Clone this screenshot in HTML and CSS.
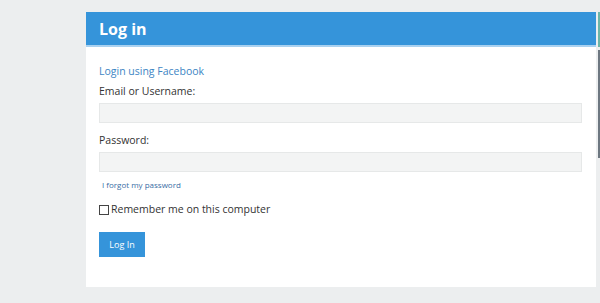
FILE: index.html
```html
<!DOCTYPE html>
<html>
<head>
<meta charset="utf-8">
<link rel="stylesheet" href="styles.css">
</head>
<body>
<div class="page">
  <div class="panel">
    <h1 class="head">Log in</h1>
    <form class="body">
      <a class="fb" href="#">Login using Facebook</a>
      <label class="lbl">Email or Username:</label>
      <div class="input"></div>
      <label class="lbl pw">Password:</label>
      <div class="input"></div>
      <a class="forgot" href="#">I forgot my password</a>
      <label class="remember"><span class="box"></span>Remember me on this computer</label>
      <button class="btn" type="button">Log In</button>
    </form>
  </div>
  <div class="edge"><div class="edge-top"></div><div class="edge-bar"></div></div>
</div>
</body>
</html>
```
FILE: styles.css
```css
html, body { margin: 0; padding: 0; }
body {
  background: #eceeef;
  font-family: "Open Sans", "DejaVu Sans", sans-serif;
  color: #333;
  width: 600px;
  height: 303px;
  overflow: hidden;
}
.page {
  position: relative;
  padding: 12px 4px 0 86px;
}
.panel {
  background: #fff;
  width: 510px;
  height: 275px;
}
.head {
  margin: 0;
  height: 33px;
  background: #3594da;
  border-bottom: 2px solid #a9d1f0;
  color: #fff;
  font-size: 16px;
  font-weight: 700;
  line-height: 35px;
  padding-left: 13px;
}
.body {
  display: flex;
  flex-direction: column;
  padding: 17px 14px 0 13px;
}
.fb {
  color: #3d85c4;
  text-decoration: none;
  font-size: 10.5px;
  line-height: 15px;
  height: 15px;
}
.lbl {
  font-size: 10.5px;
  line-height: 15px;
  margin-top: 5px;
  color: #333;
}
.lbl.pw { margin-top: 10px; }
.input {
  margin-top: 4px;
  height: 18px;
  background: #f3f4f4;
  border: 1px solid #e6e8e8;
}
.forgot {
  margin: 7px 0 0 3px;
  font-size: 8px;
  line-height: 12px;
  color: #3a6ea5;
  text-decoration: none;
}
.remember {
  display: flex;
  align-items: center;
  margin-top: 11px;
  font-size: 10.5px;
  line-height: 15px;
  color: #333;
}
.box {
  width: 8px;
  height: 8px;
  border: 1px solid #444;
  margin-right: 2px;
}
.btn {
  align-self: flex-start;
  margin-top: 15px;
  width: 46px;
  height: 25px;
  background: #3594da;
  border: 0;
  color: #fff;
  font-family: "Open Sans", "DejaVu Sans", sans-serif;
  font-size: 9px;
  padding: 0;
}
.edge {
  position: absolute;
  left: 598px;
  top: 12px;
  width: 2px;
}
.edge-top { height: 35px; background: #6cb6a8; }
.edge-bar { margin-top: 3px; height: 108px; background: #6d7780; }
```
